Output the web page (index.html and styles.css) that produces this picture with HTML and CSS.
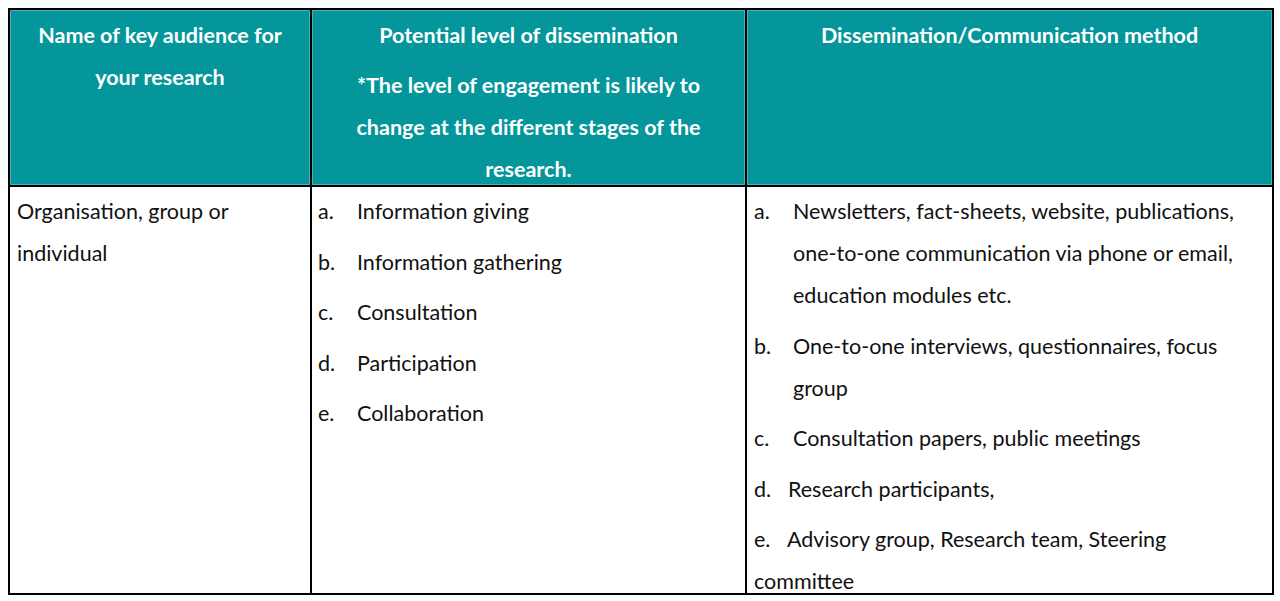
FILE: index.html
```html
<!DOCTYPE html>
<html lang="en">
<head>
<meta charset="utf-8">
<title>Dissemination table</title>
<link rel="stylesheet" href="styles.css">
</head>
<body>
<div class="table">
  <div class="cell head">
    <p class="hl">Name of key audience for<br>your research</p>
  </div>
  <div class="cell head">
    <p class="hl">Potential level of dissemination</p>
    <p class="hl gap">*The level of engagement is likely to<br>change at the different stages of the<br>research.</p>
  </div>
  <div class="cell head">
    <p class="hl">Dissemination/Communication method</p>
  </div>

  <div class="cell body c1">
    <p class="ln">Organisation, group or<br>individual</p>
  </div>
  <div class="cell body c2">
    <div class="item"><span class="mk">a.</span><span class="tx">Information giving</span></div>
    <div class="item"><span class="mk">b.</span><span class="tx">Information gathering</span></div>
    <div class="item"><span class="mk">c.</span><span class="tx">Consultation</span></div>
    <div class="item"><span class="mk">d.</span><span class="tx">Participation</span></div>
    <div class="item"><span class="mk">e.</span><span class="tx">Collaboration</span></div>
  </div>
  <div class="cell body c3">
    <div class="item"><span class="mk">a.</span><span class="tx">Newsletters, fact-sheets, website, publications,<br>one-to-one communication via phone or email,<br>education modules etc.</span></div>
    <div class="item"><span class="mk">b.</span><span class="tx">One-to-one interviews, questionnaires, focus<br>group</span></div>
    <div class="item"><span class="mk">c.</span><span class="tx">Consultation papers, public meetings</span></div>
    <p class="para"><span class="mk2">d.</span>Research participants,</p>
    <p class="para last-para"><span class="mk3">e.</span>Advisory group, Research team, Steering<span class="last">committee</span></p>
  </div>
</div>
</body>
</html>
```

FILE: styles.css
```css
html, body {
  margin: 0;
  padding: 0;
  background: #ffffff;
}
body {
  padding: 8px;
  font-family: Lato, "Liberation Sans", sans-serif;
  font-size: 21.5px;
  color: #111111;
}
.table {
  display: grid;
  grid-template-columns: 300px 433px 525px;
  grid-template-rows: 175px 406px;
  gap: 2px;
  width: 1262px;
  background: #000000;
  border: 2px solid #000000;
}
.cell {
  background: #ffffff;
  overflow: hidden;
}
.head {
  background: #04969b;
  box-shadow: inset 0 0 0 1px #47b2b5;
  color: #ffffff;
  font-weight: 700;
  text-align: center;
  padding-top: 4px;
}
.hl {
  margin: 0;
  line-height: 42px;
  white-space: nowrap;
}
.hl.gap {
  margin-top: 8px;
}
.body {
  padding: 3px 0 0 7px;
}
.ln {
  margin: 0;
  line-height: 42px;
  white-space: nowrap;
}
.c2 {
  padding-left: 6px;
}
.item {
  display: flex;
  line-height: 42px;
  white-space: nowrap;
  margin-bottom: 8.5px;
}
.mk {
  width: 39px;
  flex: none;
}
.para {
  margin: 0 0 8.5px;
  line-height: 42px;
  white-space: nowrap;
}
.last-para {
  margin-bottom: 0;
}
.last {
  display: block;
  line-height: 20px;
  margin-top: 11px;
}
.mk2 {
  display: inline-block;
  width: 34px;
}
.mk3 {
  display: inline-block;
  width: 33px;
}
```
